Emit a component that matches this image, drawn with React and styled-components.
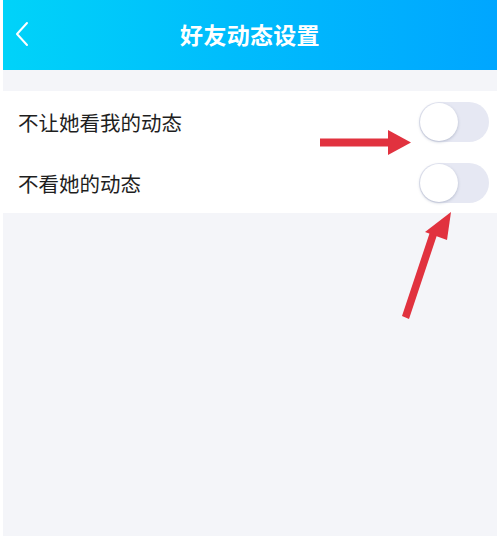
import React, { useState } from "react";
import styled, { createGlobalStyle } from "styled-components";

const GlobalStyle = createGlobalStyle`
  html, body {
    margin: 0;
    padding: 0;
    background: #ffffff;
    font-family: "Noto Sans CJK SC", "Noto Sans", sans-serif;
  }
`;

const Screen = styled.div`
  position: relative;
  margin: 0 2px 0 3px;
  height: 536px;
  background: #f4f5f9;
  display: flex;
  flex-direction: column;
  overflow: hidden;
`;

const Header = styled.header`
  height: 70px;
  flex-shrink: 0;
  background: linear-gradient(90deg, #00d3f9 0%, #00bdfc 45%, #00a6ff 100%);
  display: grid;
  grid-template-columns: 60px 1fr 60px;
  align-items: center;
`;

const BackButton = styled.button`
  border: none;
  background: none;
  padding: 0 0 2px 11px;
  height: 70px;
  display: flex;
  align-items: center;
  cursor: pointer;
`;

const Title = styled.h1`
  margin: 0 0 2px;
  text-align: center;
  color: #ffffff;
  font-size: 23px;
  font-weight: 700;
  letter-spacing: 0.3px;
`;

const Gap = styled.div`
  height: 21px;
  flex-shrink: 0;
`;

const List = styled.section`
  background: #ffffff;
`;

const Row = styled.div`
  height: 61px;
  display: flex;
  align-items: center;
  justify-content: space-between;
  padding: 0 8px 0 15px;
`;

const Label = styled.span`
  font-size: 20.5px;
  color: #1e1e1e;
`;

const Track = styled.button`
  width: 70px;
  height: 40px;
  border: none;
  border-radius: 20px;
  padding: 1px;
  background: ${(p) => (p.on ? "#12b7f5" : "#e6e8f3")};
  display: flex;
  justify-content: ${(p) => (p.on ? "flex-end" : "flex-start")};
  cursor: pointer;
`;

const Knob = styled.span`
  width: 38px;
  height: 38px;
  border-radius: 50%;
  background: #ffffff;
  box-shadow: 0 1px 3px rgba(120, 130, 160, 0.45);
`;

const Annotation = styled.svg`
  position: absolute;
  left: -3px;
  top: 0;
  pointer-events: none;
`;

const Toggle = ({ on, onClick }) => (
  <Track on={on ? 1 : 0} onClick={onClick}>
    <Knob />
  </Track>
);

const settings = ["不让她看我的动态", "不看她的动态"];

export default function App() {
  const [values, setValues] = useState([false, false]);
  const flip = (i) => setValues(values.map((v, j) => (j === i ? !v : v)));

  return (
    <>
      <GlobalStyle />
      <Screen>
        <Header>
          <BackButton aria-label="返回">
            <svg width="16" height="26" viewBox="0 0 16 26">
              <path d="M13 2 L3 13 L13 24" fill="none" stroke="#fff" strokeWidth="2" strokeLinecap="round" strokeLinejoin="round" />
            </svg>
          </BackButton>
          <Title>好友动态设置</Title>
          <div />
        </Header>
        <Gap />
        <List>
          {settings.map((s, i) => (
            <Row key={s}>
              <Label>{s}</Label>
              <Toggle on={values[i]} onClick={() => flip(i)} />
            </Row>
          ))}
        </List>
        {/* red hint arrows drawn over the screenshot */}
        <Annotation width="499" height="536" viewBox="0 0 499 536">
          <g fill="#e1323f" stroke="none">
            <rect x="320" y="138.5" width="72" height="8" />
            <polygon points="388,130 411,142.5 388,155" />
            <polygon points="402,316 409,319 438,232 431,229" />
            <polygon points="451,212 425,232 447,240" />
          </g>
        </Annotation>
      </Screen>
    </>
  );
}
